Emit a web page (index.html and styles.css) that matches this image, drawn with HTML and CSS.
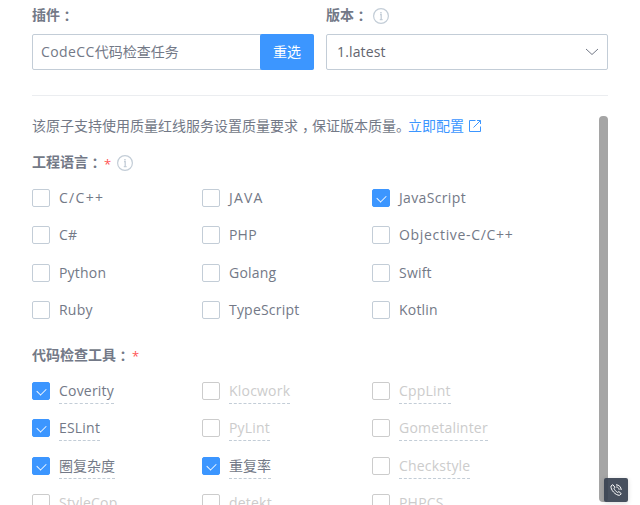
FILE: index.html
```html
<!DOCTYPE html>
<html lang="zh-CN">
<head>
<meta charset="utf-8">
<title>CodeCC代码检查任务</title>
<link rel="stylesheet" href="styles.css">
</head>
<body>
<svg class="defs" width="0" height="0">
  <symbol id="info" viewBox="0 0 16 16"><circle cx="8" cy="8" r="7.4" fill="none" stroke="#c3cdd7" stroke-width="1.2"/><path d="M7 6.7h1.2v5M6.8 11.7h2.8" fill="none" stroke="#c3cdd7" stroke-width="1.3"/><path d="M7.2 4h1.5v1.4H7.2z" fill="#c3cdd7"/></symbol>
</svg>
<div class="panel">
  <header class="atom">
    <div class="field">
      <div class="label">插件<span class="colon">：</span></div>
      <div class="picker"><span class="value"><span class="latin">CodeCC</span>代码检查任务</span><button class="reselect">重选</button></div>
    </div>
    <div class="field">
      <div class="label">版本<span class="colon">：</span><svg class="info version"><use href="#info"/></svg></div>
      <div class="select"><span>1.latest</span><svg width="14" height="8" viewBox="0 0 14 8"><path d="M1 1l6 5.5L13 1" fill="none" stroke="#737987"/></svg></div>
    </div>
  </header>
  <main class="content">
    <div class="form">
      <p class="tip">该原子支持使用质量红线服务设置质量要求<span class="comma">，</span>保证版本质量。<a class="link">立即配置<svg width="12" height="12" viewBox="0 0 12 12"><path d="M6.5.5h-6v11h11v-5M8 .5h3.500V4M11.500.5l-7 7" fill="none" stroke="#3c96ff"/></svg></a></p>
      <div class="label languages">工程语言<span class="colon">：</span><span class="required">*</span><svg class="info"><use href="#info"/></svg></div>
      <div class="options">
        <div class="option"><i class="box"></i><span class="wide">C/C++</span></div>
        <div class="option"><i class="box"></i><span class="caps">JAVA</span></div>
        <div class="option"><i class="box checked"></i><span class="script">JavaScript</span></div>
        <div class="option"><i class="box"></i><span class="latin">C#</span></div>
        <div class="option"><i class="box"></i><span class="latin">PHP</span></div>
        <div class="option"><i class="box"></i><span class="objective">Objective-C/C++</span></div>
        <div class="option"><i class="box"></i><span class="latin">Python</span></div>
        <div class="option"><i class="box"></i><span class="latin">Golang</span></div>
        <div class="option"><i class="box"></i><span class="latin">Swift</span></div>
        <div class="option"><i class="box"></i><span class="latin">Ruby</span></div>
        <div class="option"><i class="box"></i><span class="latin">TypeScript</span></div>
        <div class="option"><i class="box"></i><span class="latin">Kotlin</span></div>
      </div>
      <div class="label tools-label">代码检查工具<span class="colon">：</span><span class="required">*</span></div>
      <div class="options tools">
        <div class="option"><i class="box checked"></i><span class="latin">Coverity</span></div>
        <div class="option disabled"><i class="box"></i><span class="latin">Klocwork</span></div>
        <div class="option disabled"><i class="box"></i><span class="latin">CppLint</span></div>
        <div class="option"><i class="box checked"></i><span class="latin">ESLint</span></div>
        <div class="option disabled"><i class="box"></i><span class="latin">PyLint</span></div>
        <div class="option disabled"><i class="box"></i><span class="latin">Gometalinter</span></div>
        <div class="option"><i class="box checked"></i><span>圈复杂度</span></div>
        <div class="option"><i class="box checked"></i><span>重复率</span></div>
        <div class="option disabled"><i class="box"></i><span class="latin">Checkstyle</span></div>
        <div class="option disabled"><i class="box"></i><span class="latin">StyleCop</span></div>
        <div class="option disabled"><i class="box"></i><span class="latin">detekt</span></div>
        <div class="option disabled"><i class="box"></i><span class="latin">PHPCS</span></div>
      </div>
    </div>
    <div class="scrollbar"></div>
  </main>
</div>
<div class="phone"><svg width="12" height="12" viewBox="0 0 12 12"><path d="M2.8.7L1 2C.3 5.500 5.500 11.500 9.500 11.300L11.300 9.700 8.900 7.600 7.500 8.400C6 7.700 4.500 5.800 4 4.300L4.900 3.200zM6 .8C9 .8 11.200 3 11.200 6M6.200 2.900C8 3 9 4.200 9.200 5.800" fill="none" stroke="#fff" stroke-width="1"/></svg></div>
</body>
</html>
```
FILE: styles.css
```css
* { box-sizing: border-box; }
html, body { height: 505px; overflow: hidden; }
body {
  margin: 0;
  background: #fff;
  color: #737987;
  font: 14px/20px "Open Sans", "Noto Sans CJK SC", sans-serif;
}
.defs { display: block; height: 0; }
.panel { width: 576px; margin-left: 32px; }
.atom {
  display: grid;
  grid-template-columns: 282px 282px;
  gap: 12px;
  height: 96px;
  padding-top: 5px;
  border-bottom: 1px solid #ebedf0;
}
.label { display: flex; align-items: center; height: 20px; font-weight: 700; }
.colon { font-family: "Noto Sans CJK TC", sans-serif; }
.info { width: 16px; height: 16px; margin-left: 6px; }
.info.version { margin-left: 5px; margin-top: 2px; }
.required { width: 7px; margin: 3px 0 0 2px; color: #ff5656; font-size: 13px; font-weight: 400; }
.latin { letter-spacing: .2px; }
.caps { letter-spacing: 1.2px; }
.script { letter-spacing: .35px; }
.objective { letter-spacing: .68px; }
.wide { letter-spacing: 1.3px; }
.picker, .select { display: flex; height: 36px; margin-top: 9px; border: 1px solid #c3cdd7; border-radius: 2px; }
.picker .value { flex: 1; padding-left: 8px; line-height: 34px; }
.picker .latin { letter-spacing: .4px; }
.reselect {
  width: 54px;
  height: 36px;
  margin: -1px -1px 0 0;
  padding: 0;
  border: 0;
  border-radius: 2px;
  background: #3c96ff;
  color: #fff;
  font: inherit;
}
.select { align-items: center; justify-content: space-between; padding: 0 8px 0 10px; color: #63656e; letter-spacing: .15px; }
.content { display: flex; justify-content: space-between; height: 409px; padding-top: 20px; overflow: hidden; }
.form { width: 510px; white-space: nowrap; }
.tip { height: 20px; margin: 0; }
.comma { display: inline-block; width: 14px; padding-left: 4px; font-feature-settings: "halt"; }
.link { margin-left: -2px; color: #3c96ff; }
.link svg { margin-left: 5px; vertical-align: -1px; }
.languages { margin-top: 16px; }
.languages .info { margin-top: 2px; }
.options { display: grid; grid-template-columns: repeat(3, 170px); grid-auto-rows: 37.4px; }
.languages + .options { margin-top: 17px; }
.tools-label { margin-top: 6.400px; }
.tools { margin-top: 17px; }
.option { display: flex; align-items: flex-start; gap: 9px; }
.option span { height: 23px; margin-top: -1px; }
.tools .option span { border-bottom: 1px dashed #c3cdd7; }
.box { width: 18px; height: 18px; border: 1px solid #c3cdd7; border-radius: 2px; }
.box.checked { display: flex; justify-content: center; padding-top: 4px; border-color: #3c96ff; background: #3c96ff; }
.box.checked::after { content: ""; width: 6px; height: 9px; border: solid #fff; border-width: 0 1.500px 1.500px 0; transform: translateY(-1.500px) rotate(45deg) scale(.85); }
.disabled { color: #ccc; }
.disabled .box { border-color: #ccc; }
.scrollbar { width: 9px; height: 386px; border-radius: 4px; background: #a5a5a5; }
.phone {
  position: absolute;
  left: 604px;
  top: 478px;
  display: flex;
  align-items: center;
  justify-content: center;
  width: 24px;
  height: 24px;
  border-radius: 2px;
  background: rgba(55, 65, 80, .92);
  box-shadow: 0 1px 5px rgba(0, 0, 0, .15);
}
```
